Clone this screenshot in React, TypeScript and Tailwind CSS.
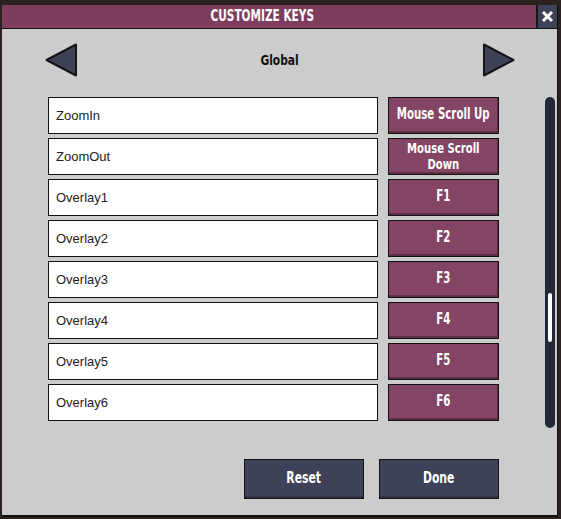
import React from "react";

const rows = [
  { name: "ZoomIn", key: "Mouse Scroll Up" },
  { name: "ZoomOut", key: "Mouse Scroll Down", two: true },
  { name: "Overlay1", key: "F1" },
  { name: "Overlay2", key: "F2" },
  { name: "Overlay3", key: "F3" },
  { name: "Overlay4", key: "F4" },
  { name: "Overlay5", key: "F5" },
  { name: "Overlay6", key: "F6" },
];

const gameFont = { fontFamily: '"DejaVu Sans Condensed", "DejaVu Sans", sans-serif' };
const inputFont = { fontFamily: '"Liberation Sans", Arial, sans-serif' };

function Arrow({ dir }: { dir: "left" | "right" }) {
  return (
    <svg width="34" height="34" viewBox="0 0 34 34">
      {dir === "left" ? (
        <polygon points="1.5,17 31,1.5 31,32.5" fill="#3d4258" stroke="#141418" strokeWidth="2" strokeLinejoin="round" />
      ) : (
        <polygon points="32.5,17 3,1.5 3,32.5" fill="#3d4258" stroke="#141418" strokeWidth="2" strokeLinejoin="round" />
      )}
    </svg>
  );
}

export default function App() {
  return (
    <div className="w-[561px] h-[519px] bg-[#2b2220] pt-[5px] pl-[2px] overflow-hidden">
      <div className="w-[556px] h-[512px] flex flex-col bg-[#cccccc] border-r-[1px] border-b-[2px] border-[#111]">
        <div className="flex h-[24px] border-b border-[#111] shrink-0">
          <div
            className="flex-1 bg-[#7f3d5e] flex items-center justify-center text-white text-[15px] font-bold pr-[14px]"
            style={gameFont}
          >
            <span className="inline-block whitespace-nowrap scale-x-[0.78]">CUSTOMIZE KEYS</span>
          </div>
          <div className="w-[2px] bg-[#1a1a1e]" />
          <div className="w-[19px] bg-[#3d4258] flex items-center justify-center text-white">
            <svg width="13" height="13" viewBox="0 0 13 13">
              <path d="M2 2 L11 11 M11 2 L2 11" stroke="white" strokeWidth="3" />
            </svg>
          </div>
        </div>
        <div className="flex items-center justify-between pl-[43px] pr-[42px] h-[62px] shrink-0">
          <Arrow dir="left" />
          <div className="text-[#111] text-[14px] font-bold" style={gameFont}>
            <span className="inline-block whitespace-nowrap scale-x-[0.85]">Global</span>
          </div>
          <Arrow dir="right" />
        </div>
        <div className="flex pl-[46px] pt-[6px]">
          <div className="flex flex-col gap-[4px]">
            {rows.map((r) => (
              <div key={r.name} className="flex gap-[10px] h-[37px]">
                <div
                  className="w-[330px] bg-white border border-[#111] flex items-center pl-[7px] text-[13px] text-[#222]"
                  style={inputFont}
                >
                  {r.name}
                </div>
                <div className="w-[111px] border border-[#111] bg-[#5e2d46]">
                  <div
                    className="h-[33px] w-[108px] bg-[#844463] flex items-center justify-center text-center text-white font-bold"
                    style={gameFont}
                  >
                    {r.two ? (
                      <span className="inline-block whitespace-nowrap scale-x-[0.8] text-[14px] leading-[16px]">
                        Mouse Scroll
                        <br />
                        Down
                      </span>
                    ) : (
                      <span className="inline-block whitespace-nowrap scale-x-[0.76] text-[15px] leading-[15px]">{r.key}</span>
                    )}
                  </div>
                </div>
              </div>
            ))}
          </div>
          <div className="ml-[46px] w-[10px] h-[331px] rounded-full bg-[#232838] flex flex-col items-center pt-[196px]">
            <div className="w-[4px] h-[49px] rounded-full bg-white" />
          </div>
        </div>
        <div className="flex gap-[15px] pl-[242px] pt-[31px]">
          {["Reset", "Done"].map((b) => (
            <div key={b} className="w-[120px] h-[40px] border border-[#111] bg-[#2e3244]">
              <div
                className="h-[36px] w-[118px] bg-[#3d4258] flex items-center justify-center text-white text-[15px] font-bold"
                style={gameFont}
              >
                <span className="inline-block whitespace-nowrap scale-x-[0.8]">{b}</span>
              </div>
            </div>
          ))}
        </div>
      </div>
    </div>
  );
}
